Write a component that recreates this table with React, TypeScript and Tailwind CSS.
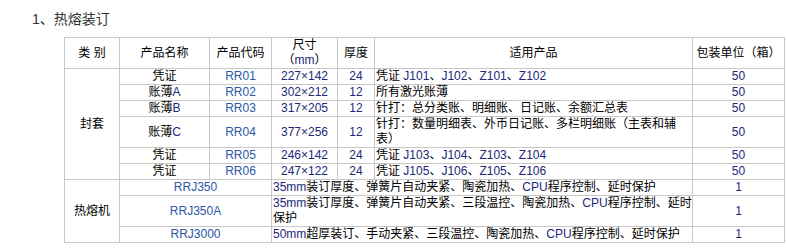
import React from "react";

const F = { fontFamily: '"Liberation Sans", Arial, "Noto Sans CJK SC", sans-serif' };

const td = "border border-[#c8c8c8] p-0 leading-[15px] align-middle";
const C = ({ children }: { children: React.ReactNode }) => (
  <span className="text-[#2a56a6]">{children}</span>
);
const N = ({ children }: { children: React.ReactNode }) => (
  <span className="text-[#22287a]">{children}</span>
);

type Row = { name: React.ReactNode; code: string; size: string; th: string; use: React.ReactNode; n: string };

const rows: Row[] = [
  { name: "凭证", code: "RR01", size: "227×142", th: "24", use: <>凭证 <N>J101</N>、<N>J102</N>、<N>Z101</N>、<N>Z102</N></>, n: "50" },
  { name: <>账薄<N>A</N></>, code: "RR02", size: "302×212", th: "12", use: "所有激光账薄", n: "50" },
  { name: <>账薄<N>B</N></>, code: "RR03", size: "317×205", th: "12", use: "针打：总分类账、明细账、日记账、余额汇总表", n: "50" },
  { name: <>账薄<N>C</N></>, code: "RR04", size: "377×256", th: "12", use: "针打：数量明细表、外币日记账、多栏明细账（主表和辅表）", n: "50" },
  { name: "凭证", code: "RR05", size: "246×142", th: "24", use: <>凭证 <N>J103</N>、<N>J104</N>、<N>Z103</N>、<N>Z104</N></>, n: "50" },
  { name: "凭证", code: "RR06", size: "247×122", th: "24", use: <>凭证 <N>J105</N>、<N>J106</N>、<N>Z105</N>、<N>Z106</N></>, n: "50" },
];

const machines = [
  { code: "RRJ350", use: <><N>35mm</N>装订厚度、弹簧片自动夹紧、陶瓷加热、<N>CPU</N>程序控制、延时保护</> },
  { code: "RRJ350A", use: <><N>35mm</N>装订厚度、弹簧片自动夹紧、三段温控、陶瓷加热、<N>CPU</N>程序控制、延时保护</> },
  { code: "RRJ3000", use: <><N>50mm</N>超厚装订、手动夹紧、三段温控、陶瓷加热、<N>CPU</N>程序控制、延时保护</> },
];

export default function App() {
  return (
    <div className="w-[786px] h-[249px] bg-white text-[12px] text-black overflow-hidden" style={F}>
      <div className="pl-[32px] pt-[11px] h-[37px] text-[14px] leading-[16px] text-[#333]">
        1、热熔装订
      </div>
      <table className="ml-[64px] w-[720px] table-fixed border-collapse">
        <colgroup>
          <col className="w-[55px]" />
          <col className="w-[90px]" />
          <col className="w-[62px]" />
          <col className="w-[66px]" />
          <col className="w-[37px]" />
          <col className="w-[318px]" />
          <col className="w-[92px]" />
        </colgroup>
        <tbody>
          <tr className="text-center">
            <td className={td}>类 别</td>
            <td className={td}>产品名称</td>
            <td className={td}>产品代码</td>
            <td className={td}>
              尺寸
              <br />（<N>mm</N>）
            </td>
            <td className={td}>厚度</td>
            <td className={td}>适用产品</td>
            <td className={td}>包装单位（箱）</td>
          </tr>
          {rows.map((r, i) => (
            <tr key={r.code}>
              {i === 0 && (
                <td className={`${td} text-center`} rowSpan={6}>
                  封套
                </td>
              )}
              <td className={`${td} text-center`}>{r.name}</td>
              <td className={`${td} text-center`}>
                <C>{r.code}</C>
              </td>
              <td className={`${td} text-center`}>
                <N>{r.size}</N>
              </td>
              <td className={`${td} text-center`}>
                <N>{r.th}</N>
              </td>
              <td className={`${td} pl-[1px]`}>{r.use}</td>
              <td className={`${td} text-center`}>
                <N>{r.n}</N>
              </td>
            </tr>
          ))}
          {machines.map((m, i) => (
            <tr key={m.code}>
              {i === 0 && (
                <td className={`${td} text-center`} rowSpan={3}>
                  热熔机
                </td>
              )}
              <td className={`${td} text-center`} colSpan={2}>
                <C>{m.code}</C>
              </td>
              <td className={`${td} pl-[1px]`} colSpan={3}>
                {m.use}
              </td>
              <td className={`${td} text-center`}>
                <N>1</N>
              </td>
            </tr>
          ))}
        </tbody>
      </table>
    </div>
  );
}
